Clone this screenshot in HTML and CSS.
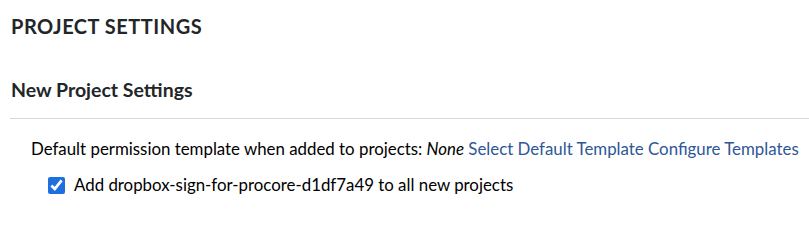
FILE: index.html
```html
<!DOCTYPE html>
<html>
<head>
<meta charset="utf-8">
<link rel="stylesheet" href="styles.css">
</head>
<body>
<div class="page">
  <h1 class="page-title">PROJECT SETTINGS</h1>
  <h2 class="section-title">New Project Settings</h2>
  <div class="section-body">
    <div class="row">Default permission template when added to projects: <em class="none">None</em> <a class="link" href="#">Select Default Template</a> <a class="link" href="#">Configure Templates</a></div>
    <label class="check-row"><input type="checkbox" class="check" checked> <span>Add dropbox-sign-for-procore-d1df7a49 to all new projects</span></label>
  </div>
</div>
</body>
</html>
```
FILE: styles.css
```css
html, body {
  margin: 0;
  padding: 0;
  background: #fff;
}
.page {
  font-family: Lato, "Liberation Sans", sans-serif;
  color: #232628;
  padding: 0 0 0 10px;
}
.page-title {
  margin: 0;
  padding-top: 14px;
  font-size: 20px;
  line-height: 24px;
  font-weight: 700;
  letter-spacing: 0.5px;
  padding-left: 1px;
}
.section-title {
  margin: 40px 0 0;
  font-size: 19.5px;
  line-height: 24px;
  font-weight: 700;
  padding-left: 1px;
  padding-bottom: 16px;
  border-bottom: 1px solid #d6dadc;
}
.section-body {
  padding: 20px 0 0 21px;
  font-size: 16.85px;
  line-height: 20px;
}
.row {
  color: #000;
}
.none {
  font-style: italic;
}
.link {
  color: #2d5797;
  text-decoration: none;
}
.check-row {
  display: flex;
  align-items: center;
  margin-top: 16px;
  padding-left: 17px;
  color: #000;
}
.check {
  margin: 0 9px 0 0;
  width: 17px;
  height: 17px;
  accent-color: #1f6fdf;
}
```
